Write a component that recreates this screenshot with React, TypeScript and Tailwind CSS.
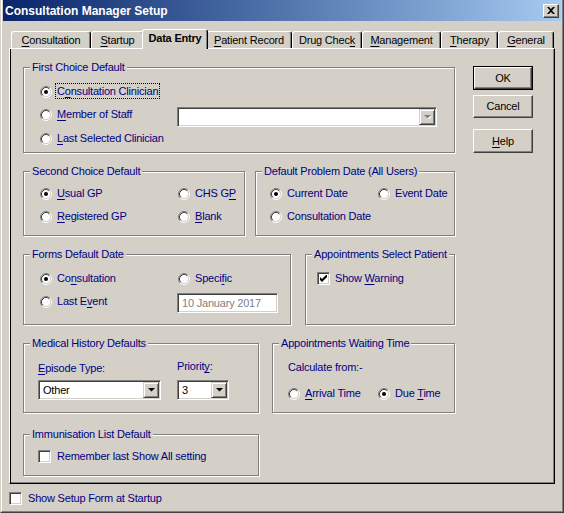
import React from "react";

const U = ({ children }: { children: React.ReactNode }) => <span className="underline underline-offset-[2px]">{children}</span>;

function Radio({ checked }: { checked?: boolean }) {
  return (
    <svg width="12" height="12" viewBox="0 0 12 12" className="shrink-0">
      <circle cx="6" cy="6" r="4.2" fill="#fff" />
      <path d="M2.11 9.89A5.5 5.5 0 0 1 9.89 2.11" stroke="#808080" fill="none" />
      <path d="M9.89 2.11A5.5 5.5 0 0 1 2.11 9.89" stroke="#fff" fill="none" />
      <path d="M2.82 9.18A4.5 4.5 0 0 1 9.18 2.82" stroke="#404040" fill="none" />
      <path d="M9.18 2.82A4.5 4.5 0 0 1 2.82 9.18" stroke="#d4d0c8" fill="none" />
      {checked && <circle cx="6" cy="6" r="2" fill="#000" />}
    </svg>
  );
}

function Check({ checked }: { checked?: boolean }) {
  return (
    <span className="w-[13px] h-[13px] shrink-0 bg-white border border-t-[#808080] border-l-[#808080] border-b-white border-r-white shadow-[inset_1px_1px_0_#404040,inset_-1px_-1px_0_#d4d0c8] flex items-center justify-center">
      {checked && (
        <svg width="7" height="7" viewBox="0 0 7 7">
          <polygon points="0,2 2,4 7,-1 7,2 2,7 0,5" fill="#000" />
        </svg>
      )}
    </span>
  );
}

function RadioItem({ checked, children, className }: { checked?: boolean; children: React.ReactNode; className?: string }) {
  return (
    <div className={`flex items-center gap-[5px] h-[23px] ${className ?? ""}`}>
      <Radio checked={checked} />
      <span className="text-[#000080] whitespace-nowrap">{children}</span>
    </div>
  );
}

function DropBtn({ disabled }: { disabled?: boolean }) {
  return (
    <div className="w-[16px] h-full shrink-0 bg-[#d4d0c8] border border-t-[#d4d0c8] border-l-[#d4d0c8] border-r-[#404040] border-b-[#404040] shadow-[inset_1px_1px_0_#fff,inset_-1px_-1px_0_#808080] flex items-center justify-center">
      <svg width="7" height="4" viewBox="0 0 7 4">
        {disabled && <polygon points="1,1 8,1 4.5,4.5" fill="#fff" />}
        <polygon points="0,0 7,0 3.5,3.5" fill={disabled ? "#808080" : "#000"} />
      </svg>
    </div>
  );
}

const sunken =
  "bg-white border border-t-[#808080] border-l-[#808080] border-b-white border-r-white shadow-[inset_1px_1px_0_#404040,inset_-1px_-1px_0_#d4d0c8]";

function Combo({ value, className, disabled }: { value?: string; className?: string; disabled?: boolean }) {
  return (
    <div className={`flex items-stretch h-[20px] p-[1px] ${sunken} ${className ?? ""}`}>
      <span className="flex-1 flex items-center pl-[3px] text-black">{value}</span>
      <DropBtn disabled={disabled} />
    </div>
  );
}

function Group({ title, className, children }: { title: string; className?: string; children?: React.ReactNode }) {
  return (
    <div className={`relative shrink-0 border border-[#808080] shadow-[inset_1px_1px_0_#fff,1px_1px_0_#fff] ${className ?? ""}`}>
      <span className="absolute left-[6px] -top-[8px] bg-[#d4d0c8] px-[2px] leading-[14px] text-[#000080] whitespace-nowrap">{title}</span>
      {children}
    </div>
  );
}

function Btn({ children, isDefault, className }: { children: React.ReactNode; isDefault?: boolean; className?: string }) {
  const face = (
    <div className="w-full h-full flex items-center justify-center bg-[#d4d0c8] border border-t-white border-l-white border-r-[#404040] border-b-[#404040] shadow-[inset_-1px_-1px_0_#808080] text-black">
      {children}
    </div>
  );
  return isDefault ? (
    <div className={`w-[60px] border border-black ${className ?? ""}`}>{face}</div>
  ) : (
    <div className={`w-[60px] ${className ?? ""}`}>{face}</div>
  );
}

const tabs = [
  { w: "w-[80px]", label: <><U>C</U>onsultation</> },
  { w: "w-[53px]", label: <><U>S</U>tartup</> },
  { w: "w-[66px]", label: <>Data Entry</>, sel: true },
  { w: "w-[86px]", label: <><U>P</U>atient Record</> },
  { w: "w-[70px]", label: <>Drug Chec<U>k</U></> },
  { w: "w-[79px]", label: <><U>M</U>anagement</> },
  { w: "w-[57px]", label: <><U>T</U>herapy</> },
  { w: "w-[56px]", label: <><U>G</U>eneral</> },
];

function Tabs() {
  return (
    <div className="flex items-end h-[19px] pl-[2px]">
      {tabs.map((t, i) =>
        t.sel ? (
          <div
            key={i}
            className={`${t.w} shrink-0 relative z-10 -mx-[2px] -mb-[1px] h-[20px] pb-[2px] bg-[#d4d0c8] border-t border-l border-r border-t-white border-l-white border-r-black rounded-t-[3px] shadow-[inset_-1px_0_0_#808080] flex items-center justify-center font-bold text-black`}
          >
            {t.label}
          </div>
        ) : (
          <div
            key={i}
            className={`${t.w} shrink-0 h-[17px] border-t border-l border-r border-t-white border-l-white border-r-black rounded-t-[3px] shadow-[inset_-1px_0_0_#808080] flex items-center justify-center text-black`}
          >
            {t.label}
          </div>
        )
      )}
    </div>
  );
}

function Panel() {
  return (
    <div className="w-[546px] h-[436px] border border-t-white border-l-white border-r-black border-b-black shadow-[inset_1px_0_0_#000,inset_-1px_-1px_0_#808080] pl-[13px] pt-[18px] flex gap-[18px]">
      <div className="flex flex-col w-[432px]">
        <Group title="First Choice Default" className="w-[432px] h-[86px] pt-[12px] pl-[16px]">
          <RadioItem checked>
            <span className="outline outline-1 outline-dotted outline-black outline-offset-[1px]">
              C<U>o</U>nsultation Clinician
            </span>
          </RadioItem>
          <div className="flex">
            <RadioItem className="w-[137px]">
              <U>M</U>ember of Staff
            </RadioItem>
            <Combo disabled className="w-[260px] mt-[4px]" />
          </div>
          <RadioItem>
            <U>L</U>ast Selected Clinician
          </RadioItem>
        </Group>

        <div className="flex gap-[10px] mt-[18px]">
          <Group title="Second Choice Default" className="w-[222px] h-[65px] pt-[10px] pl-[16px]">
            <div className="grid grid-cols-[138px_1fr]">
              <RadioItem checked>
                <U>U</U>sual GP
              </RadioItem>
              <RadioItem>
                CHS G<U>P</U>
              </RadioItem>
              <RadioItem>
                <U>R</U>egistered GP
              </RadioItem>
              <RadioItem>
                <U>B</U>lank
              </RadioItem>
            </div>
          </Group>
          <Group title="Default Problem Date (All Users)" className="w-[200px] h-[65px] pt-[10px] pl-[14px]">
            <div className="grid grid-cols-[108px_1fr]">
              <RadioItem checked>Current Date</RadioItem>
              <RadioItem>Event Date</RadioItem>
              <RadioItem className="col-span-2">Consultation Date</RadioItem>
            </div>
          </Group>
        </div>

        <div className="flex gap-[14px] mt-[18px]">
          <Group title="Forms Default Date" className="w-[268px] h-[71px] pt-[12px] pl-[16px]">
            <div className="grid grid-cols-[138px_1fr]">
              <RadioItem checked>
                Co<U>n</U>sultation
              </RadioItem>
              <RadioItem>
                Speci<U>f</U>ic
              </RadioItem>
              <RadioItem>
                Last E<U>v</U>ent
              </RadioItem>
              <div className={`-ml-[1px] mt-[3px] w-[101px] h-[20px] flex items-center pl-[4px] text-[#808080] ${sunken}`}>
                10 January 2017
              </div>
            </div>
          </Group>
          <Group title="Appointments Select Patient" className="w-[150px] h-[71px] pt-[12px] pl-[11px]">
            <div className="flex items-center gap-[5px] h-[23px]">
              <Check checked />
              <span className="text-[#000080]">
                Show <U>W</U>arning
              </span>
            </div>
          </Group>
        </div>

        <div className="flex gap-[13px] mt-[18px]">
          <Group title="Medical History Defaults" className="w-[236px] h-[70px] pt-[17px] pl-[14px]">
            <div className="flex">
              <div className="w-[139px] flex flex-col">
                <span className="leading-[14px] text-[#000080]">
                  <U>E</U>pisode Type:
                </span>
                <Combo value="Other" className="w-[123px] mt-[5px]" />
              </div>
              <div className="flex flex-col">
                <span className="leading-[14px] -mt-[2px] mb-[2px] text-[#000080]">
                  Priorit<U>y</U>:
                </span>
                <Combo value="3" className="w-[52px] mt-[5px]" />
              </div>
            </div>
          </Group>
          <Group title="Appointments Waiting Time" className="w-[183px] h-[70px] pt-[16px] pl-[15px]">
            <div className="leading-[14px] text-[#000080]">Calculate from:-</div>
            <div className="grid grid-cols-[90px_1fr] mt-[8px]">
              <RadioItem>
                <U>A</U>rrival Time
              </RadioItem>
              <RadioItem checked>
                Due <U>T</U>ime
              </RadioItem>
            </div>
          </Group>
        </div>

        <Group title="Immunisation List Default" className="w-[236px] h-[42px] mt-[21px] pt-[10px] pl-[14px]">
          <div className="flex items-center gap-[6px] h-[23px]">
            <Check />
            <span className="text-[#000080]">Remember last Show All setting</span>
          </div>
        </Group>
      </div>

      <div className="flex flex-col -mt-[1px]">
        <Btn isDefault className="h-[24px]">OK</Btn>
        <Btn className="h-[23px] mt-[5px]">Cancel</Btn>
        <Btn className="h-[24px] mt-[11px]">
          <U>H</U>elp
        </Btn>
      </div>
    </div>
  );
}

export default function App() {
  return (
    <div className="w-[564px] h-[513px] bg-[#d4d0c8] border-l border-r border-b border-l-[#d4d0c8] border-r-[#404040] border-b-[#404040] font-['Liberation_Sans',Arial,sans-serif] text-[11px] tracking-[-0.2px] select-none">
      <div className="h-full border-l border-r border-b border-l-white border-r-[#808080] border-b-[#808080] px-[1px] flex flex-col">
        <div className="h-[21px] shrink-0 bg-linear-to-r from-[#0a246a] to-[#a6caf0] flex items-center justify-between pl-[2px]">
          <span className="text-white font-bold text-[12px] tracking-normal">Consultation Manager Setup</span>
          <div className="w-[16px] h-[14px] mr-[2px] bg-[#d4d0c8] border border-t-white border-l-white border-r-[#404040] border-b-[#404040] shadow-[inset_-1px_-1px_0_#808080] flex items-center justify-center">
            <svg width="8" height="7" viewBox="0 0 8 7">
              <path d="M0 0h2l2 2 2-2h2L5 3.5 8 7H6L4 5 2 7H0l3-3.5z" fill="#000" />
            </svg>
          </div>
        </div>
        <div className="pl-[6px] pt-[8px]">
          <Tabs />
          <Panel />
          <div className="flex items-center gap-[6px] mt-[6px]">
            <Check />
            <span className="text-[#000080]">Show Setup Form at Startup</span>
          </div>
        </div>
      </div>
    </div>
  );
}
